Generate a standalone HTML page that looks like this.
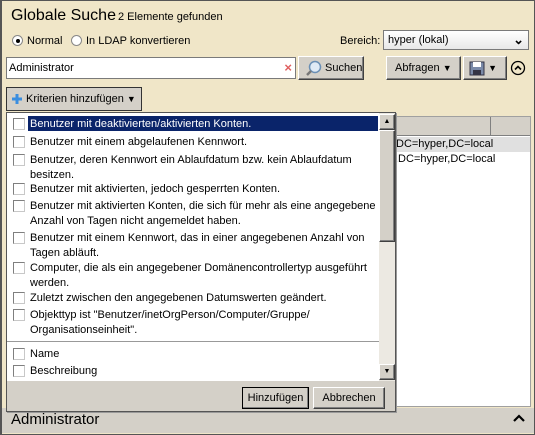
<!DOCTYPE html>
<html><head><meta charset="utf-8"><style>
*{box-sizing:border-box;margin:0;padding:0}
body{width:535px;height:435px;overflow:hidden;background:#f0e6c8;font-family:"Liberation Sans",sans-serif;font-size:11px;color:#000;position:relative}
.a{position:absolute}
.btn{position:absolute;background:#d4d0c8;border:1px solid;border-color:#fff #404040 #404040 #fff;box-shadow:inset -1px -1px 0 #808080;font-size:11px}
.cb{position:absolute;left:6px;width:12px;height:12px;border:1px solid #7f7f7f;background:#fff;border-right-color:#c8c8c8;border-bottom-color:#c8c8c8}
.it{position:absolute;left:0;width:370px;line-height:15px}
.it span{position:absolute;left:23px;top:0}
</style></head><body>
<div class="a" style="left:0;top:0;width:535px;height:435px;border:1px solid #555;border-left:2px solid #555"></div>
<div class="a" style="left:11px;top:7px;font-size:16px">Globale Suche</div>
<div class="a" style="left:118px;top:11px;font-size:11px">2 Elemente gefunden</div>
<div class="a" style="left:12px;top:35px;width:11px;height:11px;border-radius:50%;background:#fff;border:1px solid #888"><div class="a" style="left:2.5px;top:2.5px;width:4px;height:4px;border-radius:50%;background:#000"></div></div>
<div class="a" style="left:27px;top:35px">Normal</div>
<div class="a" style="left:71px;top:35px;width:11px;height:11px;border-radius:50%;background:#fff;border:1px solid #888"></div>
<div class="a" style="left:86px;top:35px">In LDAP konvertieren</div>
<div class="a" style="left:340px;top:35px">Bereich:</div>
<div class="a" style="left:383px;top:30px;width:146px;height:20px;background:#fff;border:1px solid #7a7a7a;padding:3px 4px;background:linear-gradient(#fff,#e8e8e8)">hyper (lokal)<span class="a" style="right:4px;top:1px;font-size:13px;font-weight:bold">&#x2304;</span></div>
<div class="a" style="left:6px;top:57px;width:290px;height:22px;background:#fff;border:1px solid #7a7a7a;padding:4px 2px">Administrator<span class="a" style="right:3px;top:2px;color:#e06060;font-size:13px;font-weight:bold">×</span></div>
<div class="btn" style="left:298px;top:56px;width:66px;height:24px;padding:5px 0 0 26px">Suchen
<svg class="a" style="left:6px;top:3px" width="18" height="17"><circle cx="10" cy="7" r="5.5" fill="#dfeaf5" stroke="#6a8fb5" stroke-width="1.5"/><line x1="6" y1="11" x2="2" y2="15" stroke="#777" stroke-width="2.5"/></svg></div>
<div class="btn" style="left:386px;top:56px;width:75px;height:24px;padding:5px 0 0 8px">Abfragen <span style="font-size:9px">&#9660;</span></div>
<div class="btn" style="left:463px;top:56px;width:44px;height:24px;padding:4px 0 0 5px"><svg width="16" height="15" style="vertical-align:top"><rect x="1" y="1" width="14" height="13" fill="#7a8aa8" stroke="#334"/><rect x="4" y="1" width="8" height="5" fill="#fff"/><rect x="4" y="9" width="8" height="5" fill="#334"/></svg> <span style="font-size:9px;position:relative;top:1px">&#9660;</span></div>
<svg class="a" style="left:510px;top:60px" width="16" height="16"><circle cx="8" cy="8" r="6.5" fill="none" stroke="#000" stroke-width="1.3"/><polyline points="5,9.5 8,6.5 11,9.5" fill="none" stroke="#000" stroke-width="1.6"/></svg>
<div class="btn" style="left:6px;top:87px;width:136px;height:24px;border:1px solid #333;box-shadow:none;padding:5px 0 0 19px">Kriterien hinzufügen <span style="font-size:9px">&#9660;</span>
<svg class="a" style="left:5px;top:6px" width="10" height="10"><path d="M3.5 0h3v3.5h3.5v3h-3.5v3.5h-3v-3.5h-3.5v-3h3.5z" fill="#3a8ee0"/></svg></div>
<!-- results -->
<div class="a" style="left:394px;top:116px;width:137px;height:291px;background:#fff;border:1px solid #a0a0a0"></div>
<div class="a" style="left:395px;top:117px;width:135px;height:19px;background:#d4d0c8;border-bottom:1px solid #808080"></div>
<div class="a" style="left:490px;top:117px;width:1px;height:19px;background:#808080"></div>
<div class="a" style="left:395px;top:137px;width:135px;height:15px;background:#e0e0e0"></div>
<div class="a" style="left:396px;top:138px;font-size:11px">DC=hyper,DC=local</div>
<div class="a" style="left:395px;top:153px;font-size:11px">,DC=hyper,DC=local</div>
<!-- bottom bar -->
<div class="a" style="left:2px;top:408px;width:532px;height:25px;background:#d4d0c8"></div>
<div class="a" style="left:11px;top:411px;font-size:15px">Administrator</div>
<svg class="a" style="left:512px;top:413px" width="14" height="10"><polyline points="2,8 7,3 12,8" fill="none" stroke="#000" stroke-width="2.2"/></svg>
<!-- dropdown -->
<div class="a" style="left:6px;top:112px;width:390px;height:300px;background:#d4d0c8;border:1px solid #555;box-shadow:1px 1px 0 #999">
 <div class="a" style="left:0;top:0;width:372px;height:268px;background:#fff;overflow:hidden">
  <div class="a" style="left:21px;top:3px;width:350px;height:15px;background:#0a246a"></div>
  <div class="it" style="top:4px"><div class="cb" style="top:1px"></div><span style="color:#fff">Benutzer mit deaktivierten/aktivierten Konten.</span></div>
  <div class="it" style="top:22px"><div class="cb" style="top:1px"></div><span>Benutzer mit einem abgelaufenen Kennwort.</span></div>
  <div class="it" style="top:40px"><div class="cb" style="top:1px"></div><span>Benutzer, deren Kennwort ein Ablaufdatum bzw. kein Ablaufdatum<br>besitzen.</span></div>
  <div class="it" style="top:69px"><div class="cb" style="top:1px"></div><span>Benutzer mit aktivierten, jedoch gesperrten Konten.</span></div>
  <div class="it" style="top:86px"><div class="cb" style="top:1px"></div><span>Benutzer mit aktivierten Konten, die sich für mehr als eine angegebene<br>Anzahl von Tagen nicht angemeldet haben.</span></div>
  <div class="it" style="top:118px"><div class="cb" style="top:1px"></div><span>Benutzer mit einem Kennwort, das in einer angegebenen Anzahl von<br>Tagen abläuft.</span></div>
  <div class="it" style="top:148px"><div class="cb" style="top:1px"></div><span>Computer, die als ein angegebener Domänencontrollertyp ausgeführt<br>werden.</span></div>
  <div class="it" style="top:178px"><div class="cb" style="top:1px"></div><span>Zuletzt zwischen den angegebenen Datumswerten geändert.</span></div>
  <div class="it" style="top:195px"><div class="cb" style="top:1px"></div><span>Objekttyp ist "Benutzer/inetOrgPerson/Computer/Gruppe/<br>Organisationseinheit".</span></div>
  <div class="a" style="left:0;top:228px;width:372px;height:1px;background:#999"></div>
  <div class="it" style="top:234px"><div class="cb" style="top:1px"></div><span>Name</span></div>
  <div class="it" style="top:251px"><div class="cb" style="top:1px"></div><span>Beschreibung</span></div>
 </div>
 <div class="a" style="left:372px;top:0;width:16px;height:268px;background:#ece9e2"></div>
 <div class="btn" style="left:372px;top:1px;width:16px;height:16px;font-size:7px;text-align:center;line-height:13px">&#9650;</div>
 <div class="btn" style="left:372px;top:17px;width:16px;height:112px"></div>
 <div class="btn" style="left:372px;top:251px;width:16px;height:16px;font-size:7px;text-align:center;line-height:13px">&#9660;</div>
 <div class="btn" style="left:235px;top:274px;width:67px;height:22px;border:1px solid #000;text-align:center;padding-top:4px">Hinzufügen</div>
 <div class="btn" style="left:306px;top:274px;width:72px;height:22px;text-align:center;padding-top:4px">Abbrechen</div>
</div>
</body></html>
